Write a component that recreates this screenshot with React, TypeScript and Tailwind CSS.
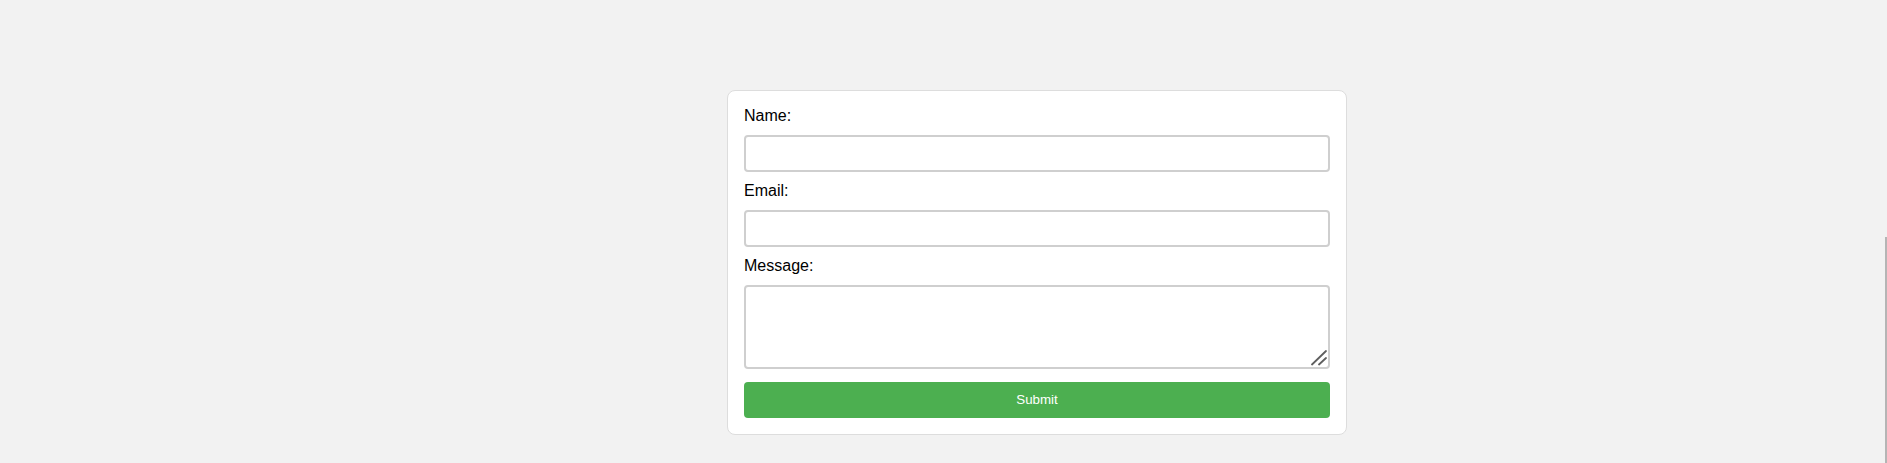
import React from "react";

export default function App() {
  return (
    <div
      className="relative min-h-screen w-full bg-[#f2f2f2] overflow-hidden"
      style={{ fontFamily: '"Liberation Sans", Arial, sans-serif' }}
    >
      <div className="pt-[90px] pl-[727px]">
        <form
          className="w-[620px] bg-white border border-[#dddddd] rounded-[8px] p-4 flex flex-col"
          onSubmit={(e) => e.preventDefault()}
        >
          <label className="block text-[16px] leading-[18px] text-black">Name:</label>
          <input
            type="text"
            className="mt-[10px] block w-full h-[37px] border-2 border-[#cfcfcf] rounded-[4px] px-2 text-[16px] outline-none"
          />
          <label className="mt-[10px] block text-[16px] leading-[18px] text-black">Email:</label>
          <input
            type="email"
            className="mt-[10px] block w-full h-[37px] border-2 border-[#cfcfcf] rounded-[4px] px-2 text-[16px] outline-none"
          />
          <label className="mt-[10px] block text-[16px] leading-[18px] text-black">Message:</label>
          <div className="relative mt-[10px]">
            <textarea className="block w-full h-[84px] border-2 border-[#cfcfcf] rounded-[4px] px-2 text-[16px] outline-none resize-none" />
            <svg
              className="pointer-events-none absolute right-[3px] bottom-[3px]"
              width="16"
              height="16"
              viewBox="0 0 16 16"
            >
              <line x1="1" y1="14.5" x2="15" y2="1" stroke="#5f5f5f" strokeWidth="1.8" strokeLinecap="round" />
              <line x1="8" y1="14.5" x2="15" y2="8" stroke="#5f5f5f" strokeWidth="1.8" strokeLinecap="round" />
            </svg>
          </div>
          <button
            type="submit"
            className="mt-[13px] block w-full h-[36px] bg-[#4caf50] text-white rounded-[4px] text-[13.33px] font-normal"
          >
            Submit
          </button>
        </form>
      </div>
      <div className="absolute right-0 top-[237px] bottom-0 w-[2px] bg-[#b5b5b5]" />
    </div>
  );
}
